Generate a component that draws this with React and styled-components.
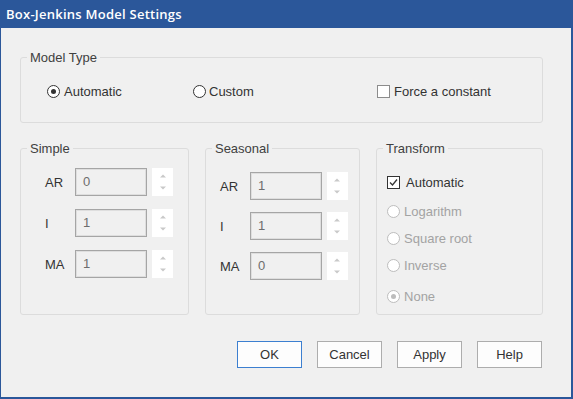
import React from "react";
import styled, { createGlobalStyle } from "styled-components";

const GlobalStyle = createGlobalStyle`
  html, body {
    margin: 0;
    padding: 0;
    background: #f0f0f0;
  }
  * {
    box-sizing: border-box;
  }
`;

const Window = styled.div`
  width: 573px;
  height: 399px;
  background: #f0f0f0;
  border: 1px solid #2b579a;
  border-width: 0 2px 2px 1px;
  display: flex;
  flex-direction: column;
  font-family: "Liberation Sans", Arial, sans-serif;
  font-size: 13px;
  color: #333;
`;

const TitleBar = styled.div`
  height: 28px;
  margin: 0 -2px 0 -1px;
  background: #2b579a;
  color: #fff;
  font-family: "Open Sans", "Liberation Sans", sans-serif;
  font-weight: 600;
  font-size: 13px;
  letter-spacing: 0.25px;
  display: flex;
  align-items: center;
  padding-left: 6px;
  padding-bottom: 1px;
`;

const Body = styled.div`
  flex: 1;
  padding: 22px 28px 0 19px;
  display: flex;
  flex-direction: column;
`;

// fieldset keeps the legend cut into the top border; horizontal insets live on the content
const Group = styled.fieldset`
  margin: 0;
  min-width: 0;
  width: ${(p) => p.width || "auto"};
  border: 1px solid #dcdcdc;
  border-radius: 3px;
  padding: ${(p) => p.pad || "0"};
`;

const Legend = styled.legend`
  margin-left: 6px;
  padding: 0 3px;
  line-height: 15px;
  color: #404040;
`;

const ModelRow = styled.div`
  display: flex;
  align-items: center;
  height: 16px;
  padding-left: 26px;
`;

const Option = styled.label`
  display: flex;
  align-items: center;
  gap: ${(p) => p.gap || "4px"};
  width: ${(p) => p.width || "auto"};
  height: ${(p) => p.height || "16px"};
  margin-top: ${(p) => p.offset || "0"};
  color: ${(p) => (p.disabled ? "#a3a3a3" : "#333")};
  white-space: nowrap;
`;

const Radio = styled.span`
  width: 13px;
  height: 13px;
  border-radius: 50%;
  border: 1px solid ${(p) => (p.disabled ? "#bdbdbd" : "#333")};
  background: #fff;
  display: flex;
  align-items: center;
  justify-content: center;
  flex-shrink: 0;
  &::after {
    content: "";
    width: 5px;
    height: 5px;
    border-radius: 50%;
    background: ${(p) => (p.disabled ? "#bdbdbd" : "#333")};
    display: ${(p) => (p.checked ? "block" : "none")};
  }
`;

const Box = styled.span`
  width: 13px;
  height: 13px;
  border: 1px solid ${(p) => (p.light ? "#8c8c8c" : "#333")};
  background: #fff;
  display: flex;
  align-items: center;
  justify-content: center;
  flex-shrink: 0;
`;

const GroupRow = styled.div`
  display: flex;
  margin-top: 18px;
  gap: 16px;
  align-items: stretch;
`;

const Fields = styled.div`
  display: flex;
  flex-direction: column;
  gap: ${(p) => p.gap};
  padding-left: ${(p) => p.inset};
`;

const FieldRow = styled.div`
  display: flex;
  align-items: center;
  height: 28px;
`;

const FieldLabel = styled.span`
  width: 30px;
  color: #333;
`;

const NumberBox = styled.div`
  width: 72px;
  height: 28px;
  border: 1px solid #a5a5a5;
  box-shadow: inset 0 0 0 1px #dedede;
  background: #f0f0f0;
  color: #6d6d6d;
  padding: 0 7px 2px;
  display: flex;
  align-items: center;
`;

const Spinner = styled.div`
  width: 21px;
  height: 28px;
  margin-left: 5px;
  background: #fff;
  display: flex;
  flex-direction: column;
  align-items: center;
  justify-content: center;
  gap: 8px;
`;

const TransformList = styled.div`
  display: flex;
  flex-direction: column;
  padding-left: 10px;
`;

const ButtonRow = styled.div`
  display: flex;
  justify-content: flex-end;
  gap: 15px;
  margin-top: 26px;
  padding-right: 1px;
`;

const Button = styled.button`
  width: 65px;
  height: 27px;
  background: #fdfdfd;
  border: 1px solid ${(p) => (p.primary ? "#3c7fd0" : "#adadad")};
  font-family: "Liberation Sans", Arial, sans-serif;
  font-size: 13px;
  color: #333;
  padding: 0;
`;

const Arrow = ({ down }) => (
  <svg width="6" height="4" viewBox="0 0 6 4">
    <path d={down ? "M0 0.5 L6 0.5 L3 3.5 Z" : "M0 3.5 L6 3.5 L3 0.5 Z"} fill="#c9c9c9" />
  </svg>
);

const Check = () => (
  <svg width="11" height="11" viewBox="0 0 11 11">
    <path d="M2 5.5 L4.5 8 L9 2.5" fill="none" stroke="#333" strokeWidth="1.3" />
  </svg>
);

const Field = ({ label, value }) => (
  <FieldRow>
    <FieldLabel>{label}</FieldLabel>
    <NumberBox>{value}</NumberBox>
    <Spinner>
      <Arrow />
      <Arrow down />
    </Spinner>
  </FieldRow>
);

const App = () => {
  return (
    <>
      <GlobalStyle />
      <Window>
        <TitleBar>Box-Jenkins Model Settings</TitleBar>
        <Body>
          <Group pad="18px 0 23px 0">
            <Legend>Model Type</Legend>
            <ModelRow>
              <Option width="146px">
                <Radio checked />
                Automatic
              </Option>
              <Option width="184px" gap="3px">
                <Radio />
                Custom
              </Option>
              <Option gap="4px">
                <Box light />
                Force a constant
              </Option>
            </ModelRow>
          </Group>

          <GroupRow>
            <Group width="170px" pad="12px 0 36px 0">
              <Legend>Simple</Legend>
              <Fields gap="13px" inset="24px">
                <Field label="AR" value="0" />
                <Field label="I" value="1" />
                <Field label="MA" value="1" />
              </Fields>
            </Group>

            <Group width="156px" pad="16px 0 0 0">
              <Legend>Seasonal</Legend>
              <Fields gap="12px" inset="14px">
                <Field label="AR" value="1" />
                <Field label="I" value="1" />
                <Field label="MA" value="0" />
              </Fields>
            </Group>

            <Group width="168px" pad="13px 0 0 0">
              <Legend>Transform</Legend>
              <TransformList>
                <Option height="27px" gap="6px">
                  <Box>
                    <Check />
                  </Box>
                  Automatic
                </Option>
                <Option height="27px" disabled offset="2px">
                  <Radio disabled />
                  Logarithm
                </Option>
                <Option height="27px" disabled>
                  <Radio disabled />
                  Square root
                </Option>
                <Option height="27px" disabled>
                  <Radio disabled />
                  Inverse
                </Option>
                <Option height="27px" disabled offset="4px">
                  <Radio disabled checked />
                  None
                </Option>
              </TransformList>
            </Group>
          </GroupRow>

          <ButtonRow>
            <Button primary>OK</Button>
            <Button>Cancel</Button>
            <Button>Apply</Button>
            <Button>Help</Button>
          </ButtonRow>
        </Body>
      </Window>
    </>
  );
};

export default App;
